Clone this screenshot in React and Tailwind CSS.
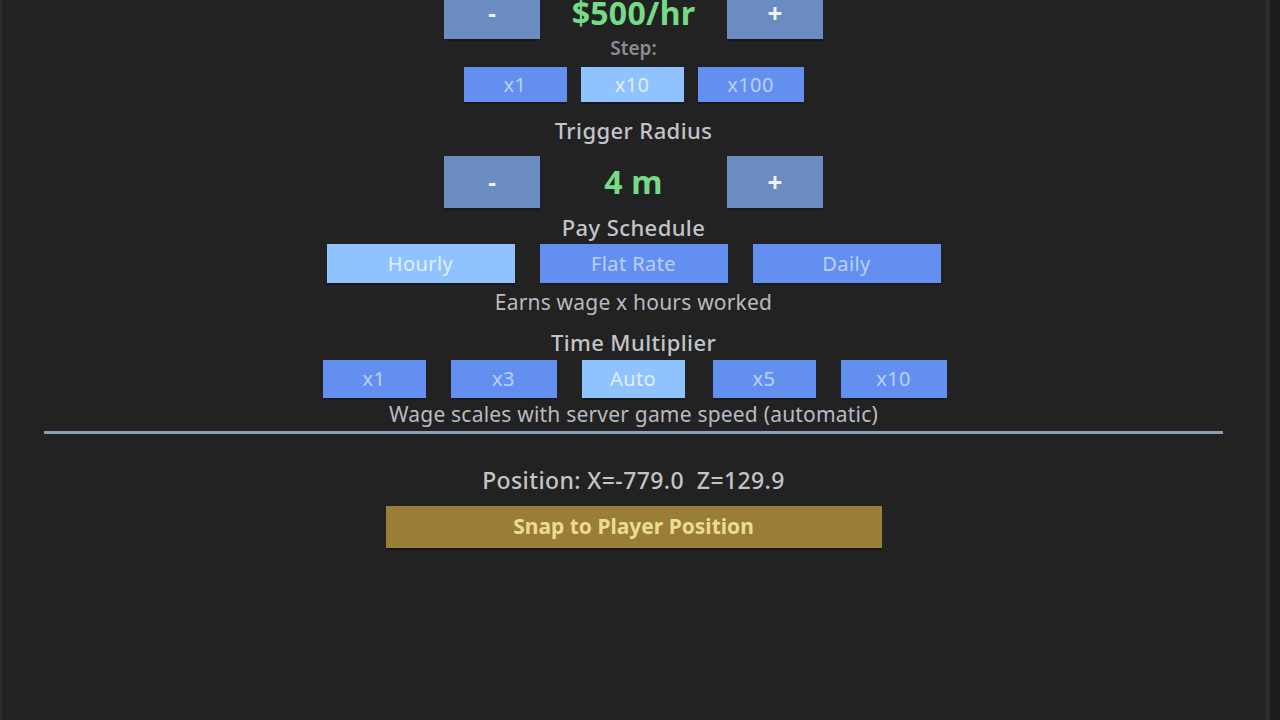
import React, { useState } from "react";

const font = { fontFamily: '"Noto Sans", "Open Sans", sans-serif' };

// Stepper row: - value +  (the top one is scrolled so its upper part is hidden)
function Stepper({ value, clipped }) {
    const h = clipped ? "h-[39px] pb-[13px]" : "h-[52px]";
    return (
        <div className={`flex items-start justify-center gap-[187px] relative ${clipped ? "h-[39px]" : "h-[52px]"}`}>
            <button className={`w-[96px] ${h} bg-[#6a8cc0] text-[#eef2fa] text-[24px] leading-none font-bold shadow-[0_2px_0_#1a1a1a]`}>-</button>
            <div className={`absolute left-0 right-0 top-0 flex items-center justify-center ${clipped ? "h-[26px]" : "h-[52px]"} text-[#76db86] text-[32px] font-bold leading-none whitespace-nowrap tracking-[0.3px]`}>
                {value}
            </div>
            <button className={`w-[96px] ${h} bg-[#6a8cc0] text-[#eef2fa] text-[26px] leading-none font-bold shadow-[0_2px_0_#1a1a1a]`}>+</button>
        </div>
    );
}

function Choice({ label, active, className }) {
    return (
        <button
            className={`${className} ${
                active ? "bg-[#8ec3ff] text-[#e3efff]" : "bg-[#6390f0] text-[#bcd0fa]"
            } text-[20px] tracking-[0.4px] shadow-[0_2px_0_#1a1a1a]`}
        >
            {label}
        </button>
    );
}

function Label({ children, className = "" }) {
    return (
        <div className={`h-[26px] flex items-center justify-center text-[#c3c4ca] text-[22px] font-medium tracking-[0.4px] whitespace-nowrap ${className}`}>
            {children}
        </div>
    );
}

export default function App() {
    const [step, setStep] = useState("x10");
    return (
        <div className="w-[1280px] h-[720px] flex bg-[#1b1c1b] overflow-hidden" style={font}>
            <div className="w-[1270px] h-full shrink-0 bg-[#222222] border-l-2 border-[#2b2b2a] border-r-[5px] border-r-[#2d2e2a] flex flex-col items-center">
                <div className="w-[380px]">
                    <Stepper value="$500/hr" clipped />
                </div>
                <div className="h-[19px] flex items-center text-[#8b8b92] text-[19px] font-semibold">Step:</div>
                <div className="mt-[9px] flex gap-[14px]">
                    {["x1", "x10", "x100"].map((s) => (
                        <button
                            key={s}
                            onClick={() => setStep(s)}
                            className={`h-[35px] ${s === "x100" ? "w-[106px]" : "w-[103px]"} ${
                                step === s ? "bg-[#8ec3ff] text-[#e3efff]" : "bg-[#6390f0] text-[#bcd0fa]"
                            } text-[20px] tracking-[0.4px] shadow-[0_2px_0_#1a1a1a]`}
                        >
                            {s}
                        </button>
                    ))}
                </div>
                <Label className="mt-[15px]">Trigger Radius</Label>
                <div className="mt-[13px] w-[380px]">
                    <Stepper value="4 m" />
                </div>
                <Label className="mt-[6px]">Pay Schedule</Label>
                <div className="mt-[4px] flex gap-[25px]">
                    <Choice label="Hourly" active className="w-[188px] h-[39px]" />
                    <Choice label="Flat Rate" className="w-[188px] h-[39px]" />
                    <Choice label="Daily" className="w-[188px] h-[39px]" />
                </div>
                <div className="mt-[8px] h-[24px] flex items-center text-[#b9bac0] text-[21px] tracking-[0.2px]">Earns wage x hours worked</div>
                <Label className="mt-[14px]">Time Multiplier</Label>
                <div className="mt-[5px] ml-[2px] flex gap-[25px]">
                    <Choice label="x1" className="w-[103px] h-[38px]" />
                    <Choice label="x3" className="w-[106px] h-[38px]" />
                    <Choice label="Auto" active className="w-[103px] h-[38px]" />
                    <Choice label="x5" className="ml-[3px] w-[103px] h-[38px]" />
                    <Choice label="x10" className="w-[106px] h-[38px]" />
                </div>
                <div className="mt-[5px] h-[24px] flex items-center text-[#b9bac0] text-[21px] tracking-[0.2px] whitespace-nowrap">
                    Wage scales with server game speed (automatic)
                </div>
                <div className="mt-[4px] w-[1179px] h-[3px] bg-[#8c9cb8]"></div>
                <Label className="mt-[33px] text-[23px]">Position: X=-779.0&nbsp;&nbsp;Z=129.9</Label>
                <button className="mt-[13px] w-[496px] h-[42px] bg-[#9a7d36] text-[#ecdc92] text-[21px] font-bold shadow-[0_2px_0_#161616]">
                    Snap to Player Position
                </button>
            </div>
        </div>
    );
}
